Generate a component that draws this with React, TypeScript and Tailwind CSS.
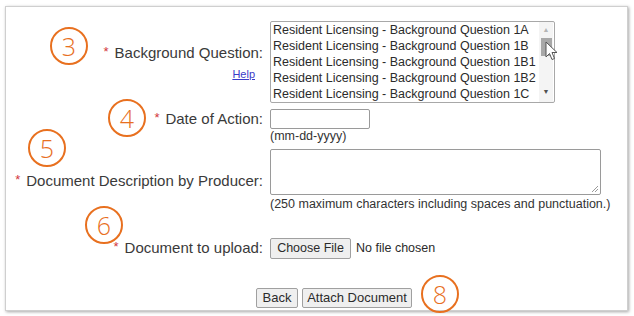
import React from 'react';

const options = [
    'Resident Licensing - Background Question 1A',
    'Resident Licensing - Background Question 1B',
    'Resident Licensing - Background Question 1B1',
    'Resident Licensing - Background Question 1B2',
    'Resident Licensing - Background Question 1C',
];

const markers = [
    { n: '3', className: 'left-[50px] top-[27px]' },
    { n: '4', className: 'left-[108px] top-[99px]' },
    { n: '5', className: 'left-[28px] top-[129px]' },
    { n: '6', className: 'left-[85px] top-[206px]' },
    { n: '8', className: 'left-[421px] top-[275px]' },
];

function Req() {
    return <span className="text-[#d2363c] text-[13px] relative -top-[2px] mr-[6px]">*</span>;
}

export default function App() {
    return (
        <div className="w-[634px] h-[316px] bg-white relative font-['Liberation_Sans',Arial,sans-serif] text-[#3a3a3a]">
            {/* Card */}
            <div className="absolute left-[5px] top-[6px] w-[623px] h-[305px] bg-white border border-[#cfcfcf] shadow-[1px_1px_3px_rgba(0,0,0,0.35)] pt-[14px]">
                {/* Background question */}
                <div className="grid grid-cols-[257px_1fr] gap-x-[7px]">
                    <div className="flex flex-col items-end self-center">
                        <div className="text-[15px] leading-[18px]"><Req />Background Question:</div>
                        <a className="text-[11px] leading-[14px] text-[#3a3ac8] underline mt-[4px] mr-[8px]">Help</a>
                    </div>
                    <div className="w-[285px] h-[82px] border border-[#a8a8a8] rounded-[2px] flex">
                        <div className="flex-1 pl-[2px]">
                            {options.map((o) => (
                                <div key={o} className="text-[12.5px] leading-[16px] text-[#2b2b2b] whitespace-nowrap">{o}</div>
                            ))}
                        </div>
                        <div className="w-[14px] flex flex-col items-center bg-[#f4f4f4] mr-[1px]">
                            <span className="text-[7px] text-[#b5b5b5] leading-[12px] mt-[2px]">▲</span>
                            <div className="w-[11px] h-[18px] bg-[#a8a8a8] mt-[2px]" />
                            <div className="flex-1" />
                            <span className="text-[7px] text-[#505050] leading-[12px] mb-[4px]">▼</span>
                        </div>
                    </div>
                </div>

                {/* Date of action */}
                <div className="grid grid-cols-[257px_1fr] gap-x-[7px] mt-[6px]">
                    <div className="text-right text-[15px] leading-[20px]"><Req />Date of Action:</div>
                    <div>
                        <div className="w-[100px] h-[20px] border border-[#9a9a9a] rounded-[2px]" />
                        <div className="text-[12.5px] leading-[14px] text-[#333]">(mm-dd-yyyy)</div>
                    </div>
                </div>

                {/* Description */}
                <div className="grid grid-cols-[257px_1fr] gap-x-[7px] mt-[6px]">
                    <div className="text-right text-[15px] leading-[20px] self-center pt-[2px]"><Req />Document Description by Producer:</div>
                    <div>
                        <div className="w-[331px] h-[46px] border border-[#9a9a9a] rounded-[2px] relative">
                            <svg className="absolute right-[1px] bottom-[1px]" width="8" height="8" viewBox="0 0 8 8">
                                <path d="M7 1L1 7M7 4L4 7" stroke="#9a9a9a" strokeWidth="1" />
                            </svg>
                        </div>
                        <div className="text-[12.5px] leading-[14px] mt-[2px] text-[#333] whitespace-nowrap">(250 maximum characters including spaces and punctuation.)</div>
                    </div>
                </div>

                {/* Upload */}
                <div className="grid grid-cols-[257px_1fr] gap-x-[7px] mt-[27px]">
                    <div className="text-right text-[15px] leading-[20px] self-center"><Req />Document to upload:</div>
                    <div className="flex items-center">
                        <div className="w-[81px] h-[21px] border border-[#a0a0a0] rounded-[2px] bg-[#efefef] text-[12.5px] flex items-center justify-center text-[#2b2b2b]">Choose File</div>
                        <span className="ml-[5px] text-[12.5px] text-[#2b2b2b]">No file chosen</span>
                    </div>
                </div>

                {/* Buttons */}
                <div className="flex gap-[4px] pl-[250px] mt-[29px]">
                    <div className="w-[42px] h-[20px] border border-[#a0a0a0] rounded-[2px] bg-[#efefef] text-[13px] flex items-center justify-center text-[#2b2b2b]">Back</div>
                    <div className="w-[110px] h-[20px] border border-[#a0a0a0] rounded-[2px] bg-[#efefef] text-[13px] flex items-center justify-center text-[#2b2b2b]">Attach Document</div>
                </div>
            </div>

            {/* Numbered annotation markers */}
            {markers.map((m) => (
                <div
                    key={m.n}
                    className={`absolute ${m.className} w-[38px] h-[38px] rounded-full border-[2.5px] border-[#e8701f] flex items-center justify-center text-[#e8701f] text-[25px] font-['Open_Sans',sans-serif] font-light leading-none`}
                >
                    {m.n}
                </div>
            ))}

            {/* Mouse cursor */}
            <svg className="absolute left-[545px] top-[41px]" width="13" height="20" viewBox="0 0 13 20">
                <path d="M1 1 L1 16 L4.5 12.5 L7 18.5 L9.5 17.5 L7 11.5 L12 11.5 Z" fill="white" stroke="#555" strokeWidth="1" strokeLinejoin="round" />
            </svg>
        </div>
    );
}
